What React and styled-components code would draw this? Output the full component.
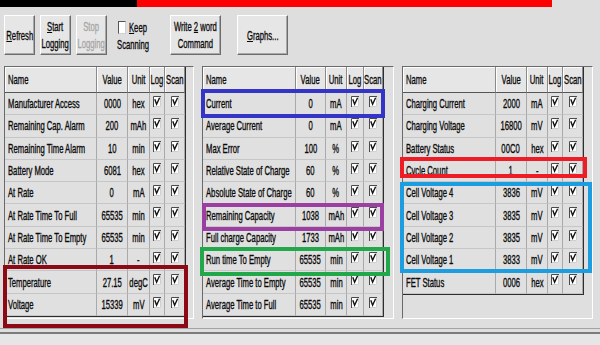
import React from "react";
import styled, { createGlobalStyle } from "styled-components";

const GlobalStyle = createGlobalStyle`
  html, body { margin: 0; padding: 0; background: #dedede; }
  body { font-family: "Liberation Sans", Arial, sans-serif; color: #0a0a0a; }
  * { box-sizing: border-box; }
`;

const Screen = styled.div`
  position: relative;
  width: 600px;
  height: 345px;
  overflow: hidden;
  background: #dedede;
  display: flex;
  flex-direction: column;
`;

const TopStrip = styled.div`
  display: flex;
  height: 7px;
  flex: none;
`;

const StripSeg = styled.div`
  width: ${(p) => p.$w}px;
  background: ${(p) => p.$c};
`;

const Toolbar = styled.div`
  display: flex;
  align-items: flex-start;
  height: 40px;
  margin-top: 8px;
  padding-left: 4px;
  flex: none;
`;

const Squeeze = styled.span`
  display: inline-block;
  white-space: nowrap;
  font-size: 13px;
  line-height: ${(p) => p.$lh || "15px"};
  text-align: center;
  -webkit-text-stroke: 0.35px currentColor;
  transform: scaleX(0.59);
  transform-origin: ${(p) => p.$origin || "left"} center;
`;

const Button = styled.div`
  width: ${(p) => p.$w}px;
  height: 40px;
  margin-left: ${(p) => p.$ml || 0}px;
  display: flex;
  align-items: center;
  justify-content: center;
  background: #e6e6e6;
  border: 1px solid;
  border-color: #ffffff #6c6c6c #6c6c6c #ffffff;
  box-shadow: inset -1px -1px #a9a9a9;
  color: ${(p) => (p.$disabled ? "#a6a6a6" : "#0a0a0a")};
  u { text-decoration: underline; }
`;

const CheckGroup = styled.div`
  margin-left: ${(p) => p.$ml}px;
  width: 31px;
  display: flex;
  flex-direction: column;
  align-items: center;
  padding-top: 5px;
`;

const CheckLine = styled.div`
  display: flex;
  align-items: center;
  height: 15px;
  width: 31px;
  justify-content: flex-start;
`;

const ToolBox = styled.div`
  width: 8px;
  height: 13px;
  background: #fff;
  border-top: 1px solid #555;
  border-left: 1px solid #555;
  border-right: 1px solid #d0d0d0;
  border-bottom: 1px solid #d0d0d0;
  flex: none;
`;

const KeepText = styled.div`
  width: 20px;
  margin-left: 3px;
  display: flex;
  justify-content: flex-start;
`;

const ScanText = styled.div`
  margin-top: 2px;
  width: 31px;
  display: flex;
  justify-content: center;
`;

const Panels = styled.div`
  display: flex;
  gap: 8px;
  padding-left: 4px;
  margin-top: 11px;
  height: 253px;
  flex: none;
`;

const ListBox = styled.div`
  width: ${(p) => p.$w}px;
  height: 253px;
  background: #dfdfdf;
  border-top: 1px solid #6a6a6a;
  border-left: 1px solid #6a6a6a;
  border-right: 1px solid #ffffff;
  border-bottom: 1px solid #ffffff;
`;

const Grid = styled.div`
  display: grid;
  width: max-content;
  grid-template-columns: ${(p) => p.$cols.map((c) => c + "px").join(" ")};
  grid-template-rows: 26px repeat(${(p) => p.$rows}, 22.3px);
  border-right: 1px solid #2e2e2e;
  border-bottom: 1px solid #2e2e2e;
`;

const HeadCell = styled.div`
  display: flex;
  align-items: center;
  justify-content: ${(p) => (p.$left ? "flex-start" : "center")};
  padding-left: ${(p) => (p.$left ? 3 : 0)}px;
  background: #e6e6e6;
  border-right: 1px solid #8a8a8a;
  border-bottom: 1px solid #555;
  box-shadow: inset 1px 1px #ffffff;
  overflow: visible;
  min-width: 0;
`;

const Cell = styled.div`
  display: flex;
  align-items: center;
  justify-content: ${(p) => (p.$left ? "flex-start" : "center")};
  padding-left: ${(p) => (p.$left ? 3 : 0)}px;
  background: #e0e0e0;
  border-right: 1px solid #a9a9a9;
  border-bottom: 1px solid #c6c6c6;
  overflow: visible;
  min-width: 0;
`;

const BoxCell = styled(Cell)`
  align-items: flex-start;
  padding-top: 3px;
`;

const Separator = styled.div`
  margin-top: 9px;
  height: 6px;
  border-top: 1px solid #a3a3a3;
  border-bottom: 2px solid #7c7c7c;
  flex: none;
`;

const StatusBar = styled.div`
  flex: 1;
  background: #e6e6e6;
`;

const Callout = styled.div`
  position: absolute;
  left: ${(p) => p.$x}px;
  top: ${(p) => p.$y}px;
  width: ${(p) => p.$w}px;
  height: ${(p) => p.$h}px;
  border: 4px solid ${(p) => p.$c};
  pointer-events: none;
`;

const CheckIcon = () => (
  <svg width="8" height="11" viewBox="0 0 8 11">
    <rect x="0" y="0" width="8" height="11" fill="#ffffff" />
    <path d="M0.5 11V0.5H8" stroke="#4a4a4a" strokeWidth="1" fill="none" />
    <path d="M7.5 1V10.5H1" stroke="#cfcfcf" strokeWidth="1" fill="none" />
    <path d="M1.8 3.2L3.6 8.2L6.6 1.8" stroke="#111" strokeWidth="1.4" fill="none" />
  </svg>
);

const tables = [
  {
    w: 190,
    cols: [92, 31, 22, 15, 20],
    rows: [
      ["Manufacturer Access", "0000", "hex"],
      ["Remaining Cap. Alarm", "200", "mAh"],
      ["Remaining Time Alarm", "10", "min"],
      ["Battery Mode", "6081", "hex"],
      ["At Rate", "0", "mA"],
      ["At Rate Time To Full", "65535", "min"],
      ["At Rate Time To Empty", "65535", "min"],
      ["At Rate OK", "1", "-"],
      ["Temperature", "27.15", "degC"],
      ["Voltage", "15339", "mV"],
    ],
  },
  {
    w: 192,
    cols: [93, 30, 21, 17, 19],
    rows: [
      ["Current", "0", "mA"],
      ["Average Current", "0", "mA"],
      ["Max Error", "100", "%"],
      ["Relative State of Charge", "60", "%"],
      ["Absolute State of Charge", "60", "%"],
      ["Remaining Capacity", "1038", "mAh"],
      ["Full charge Capacity", "1733", "mAh"],
      ["Run time To Empty", "65535", "min"],
      ["Average Time to Empty", "65535", "min"],
      ["Average Time to Full", "65535", "min"],
    ],
  },
  {
    w: 191,
    cols: [93, 31, 21, 15, 20],
    rows: [
      ["Charging Current", "2000", "mA"],
      ["Charging Voltage", "16800", "mV"],
      ["Battery Status", "00C0", "hex"],
      ["Cycle Count", "1", "-"],
      ["Cell Voltage 4", "3836", "mV"],
      ["Cell Voltage 3", "3835", "mV"],
      ["Cell Voltage 2", "3835", "mV"],
      ["Cell Voltage 1", "3833", "mV"],
      ["FET Status", "0006", "hex"],
    ],
  },
];

const callouts = [
  { x: 3, y: 265, w: 185, h: 63, c: "#8b0a16" },
  { x: 201, y: 89, w: 184, h: 29, c: "#3434c6" },
  { x: 202, y: 203, w: 182, h: 28, c: "#9b3fa3" },
  { x: 200, y: 247, w: 190, h: 29, c: "#22a74b" },
  { x: 400, y: 157, w: 187, h: 21, c: "#ee1c24" },
  { x: 400, y: 182, w: 192, h: 91, c: "#1b9ddf" },
];

const DataTable = ({ t }) => (
  <ListBox $w={t.w}>
    <Grid $cols={t.cols} $rows={t.rows.length}>
      <HeadCell $left>
        <Squeeze>Name</Squeeze>
      </HeadCell>
      <HeadCell>
        <Squeeze $origin="center">Value</Squeeze>
      </HeadCell>
      <HeadCell>
        <Squeeze $origin="center">Unit</Squeeze>
      </HeadCell>
      <HeadCell>
        <Squeeze $origin="center">Log</Squeeze>
      </HeadCell>
      <HeadCell>
        <Squeeze $origin="center">Scan</Squeeze>
      </HeadCell>
      {t.rows.map(([name, value, unit]) => (
        <React.Fragment key={name}>
          <Cell $left>
            <Squeeze>{name}</Squeeze>
          </Cell>
          <Cell>
            <Squeeze $origin="center">{value}</Squeeze>
          </Cell>
          <Cell>
            <Squeeze $origin="center">{unit}</Squeeze>
          </Cell>
          <BoxCell>
            <CheckIcon />
          </BoxCell>
          <BoxCell>
            <CheckIcon />
          </BoxCell>
        </React.Fragment>
      ))}
    </Grid>
  </ListBox>
);

export default function App() {
  return (
    <Screen>
      <GlobalStyle />
      <TopStrip>
        <StripSeg $w={137} $c="#000000" />
        <StripSeg $w={415} $c="#ff0000" />
      </TopStrip>
      <Toolbar>
        <Button $w={31}>
          <Squeeze $origin="center">
            <u>R</u>efresh
          </Squeeze>
        </Button>
        <Button $w={31} $ml={5}>
          <Squeeze $origin="center" $lh="17px">
            <u>S</u>tart
            <br />
            Logging
          </Squeeze>
        </Button>
        <Button $w={31} $ml={5} $disabled>
          <Squeeze $origin="center" $lh="17px">
            Stop
            <br />
            Logging
          </Squeeze>
        </Button>
        <CheckGroup $ml={11}>
          <CheckLine>
            <ToolBox />
            <KeepText>
              <Squeeze>
                <u>K</u>eep
              </Squeeze>
            </KeepText>
          </CheckLine>
          <ScanText>
            <Squeeze $origin="center">Scanning</Squeeze>
          </ScanText>
        </CheckGroup>
        <Button $w={51} $ml={21}>
          <Squeeze $origin="center" $lh="17px">
            Write <u>2</u> word
            <br />
            Command
          </Squeeze>
        </Button>
        <Button $w={51} $ml={16}>
          <Squeeze $origin="center">
            <u>G</u>raphs...
          </Squeeze>
        </Button>
      </Toolbar>
      <Panels>
        {tables.map((t, i) => (
          <DataTable key={i} t={t} />
        ))}
      </Panels>
      <Separator />
      <StatusBar />
      {callouts.map((c, i) => (
        <Callout key={i} $x={c.x} $y={c.y} $w={c.w} $h={c.h} $c={c.c} />
      ))}
    </Screen>
  );
}
